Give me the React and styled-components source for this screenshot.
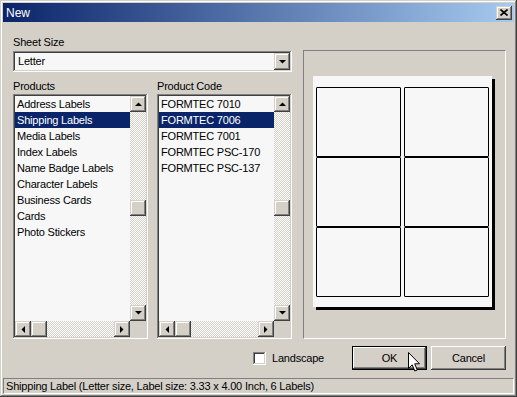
import React from 'react';
import styled, { createGlobalStyle, css } from 'styled-components';

const GlobalStyle = createGlobalStyle`
  html, body {
    margin: 0;
    padding: 0;
    background: #d4d0c8;
  }
  body {
    font-family: "Liberation Sans", Arial, sans-serif;
    font-size: 11px;
    letter-spacing: -0.2px;
    color: #000;
  }
`;

const raised = css`
  background: #d4d0c8;
  box-shadow: inset -1px -1px #404040, inset 1px 1px #d4d0c8,
    inset -2px -2px #808080, inset 2px 2px #fff;
`;

const sunken = css`
  box-shadow: inset -1px -1px #fff, inset 1px 1px #808080,
    inset -2px -2px #d4d0c8, inset 2px 2px #404040;
`;

const checker = css`
  background: repeating-conic-gradient(#d4d0c8 0 25%, #fff 0 50%) 0 0 / 2px 2px;
`;

const Window = styled.div`
  width: 517px;
  height: 397px;
  box-sizing: border-box;
  padding: 3px;
  background: #d4d0c8;
  box-shadow: inset -1px -1px #404040, inset 1px 1px #d4d0c8,
    inset -2px -2px #808080, inset 2px 2px #fff;
  display: flex;
  flex-direction: column;
`;

const TitleBar = styled.div`
  height: 19px;
  flex: none;
  display: flex;
  align-items: center;
  justify-content: space-between;
  padding-left: 3px;
  background: linear-gradient(to right, #0a246a, #a6caf0);
  color: #fff;
  font-size: 12px;
  letter-spacing: 0;
`;

const CloseBtn = styled.div`
  ${raised};
  width: 16px;
  height: 14px;
  margin-right: 2px;
  display: flex;
  align-items: center;
  justify-content: center;
`;

const Body = styled.div`
  flex: 1;
  display: flex;
  flex-direction: column;
  padding: 14px 8px 0 10px;
`;

const MainRow = styled.div`
  display: flex;
  gap: 11px;
`;

const LeftCol = styled.div`
  width: 279px;
  display: flex;
  flex-direction: column;
`;

const FieldLabel = styled.div`
  height: 13px;
  line-height: 13px;
  margin-bottom: ${(p) => p.$gap ?? 2}px;
  white-space: nowrap;
`;

const Combo = styled.div`
  ${sunken};
  height: 21px;
  box-sizing: border-box;
  padding: 2px;
  display: flex;
  background: #f7f7f7;
`;

const ComboText = styled.div`
  flex: 1;
  padding-left: 3px;
  line-height: 17px;
`;

const DropBtn = styled.div`
  ${raised};
  width: 16px;
  height: 17px;
  display: flex;
  align-items: center;
  justify-content: center;
`;

const ListsRow = styled.div`
  display: flex;
  gap: 9px;
  margin-top: 8px;
`;

const ListGroup = styled.div`
  width: 135px;
  display: flex;
  flex-direction: column;
`;

const ListBox = styled.div`
  ${sunken};
  height: 245px;
  box-sizing: border-box;
  padding: 2px;
  display: grid;
  grid-template-columns: 1fr 16px;
  grid-template-rows: 1fr 16px;
  background: #f7f7f7;
`;

const Items = styled.div`
  overflow: hidden;
  display: flex;
  flex-direction: column;
`;

const Item = styled.div`
  height: 16px;
  line-height: 16px;
  padding-left: 2px;
  white-space: nowrap;
  background: ${(p) => (p.$selected ? '#0a246a' : 'transparent')};
  color: ${(p) => (p.$selected ? '#fff' : '#000')};
`;

const VScroll = styled.div`
  ${checker};
  display: flex;
  flex-direction: column;
`;

const HScroll = styled.div`
  ${checker};
  display: flex;
`;

const Corner = styled.div`
  background: #d4d0c8;
`;

const ScrollBtn = styled.div`
  ${raised};
  width: 16px;
  height: 16px;
  flex: none;
  display: flex;
  align-items: center;
  justify-content: center;
  margin-top: ${(p) => (p.$end === 'v' ? 'auto' : '0')};
  margin-left: ${(p) => (p.$end === 'h' ? 'auto' : '0')};
`;

const Thumb = styled.div`
  ${raised};
  width: 16px;
  height: 16px;
  flex: none;
  margin-top: ${(p) => p.$top || 0}px;
`;

const Preview = styled.div`
  width: 203px;
  height: 289px;
  margin-top: 14px;
  box-sizing: border-box;
  border: 1px solid;
  border-color: #808080 #fff #fff #808080;
  padding: 25px 0 0 9px;
  display: flex;
  align-items: flex-start;
`;

const Paper = styled.div`
  width: 179px;
  height: 231px;
  box-sizing: border-box;
  padding: 11px 3px 0 3px;
  background: #f7f7f7;
  box-shadow: 3px 3px 0 #000;
  display: grid;
  grid-template-columns: 85px 85px;
  grid-auto-rows: 70px;
  column-gap: 3px;
`;

const Cell = styled.div`
  border: 1px solid #000;
  border-radius: 1px;
`;

const ButtonRow = styled.div`
  height: 24px;
  margin-top: 7px;
  display: flex;
  align-items: center;
  justify-content: flex-end;
  gap: 4px;
`;

const CheckLabel = styled.label`
  display: flex;
  align-items: center;
  gap: 6px;
  margin-right: 24px;
`;

const CheckBox = styled.span`
  ${sunken};
  width: 13px;
  height: 13px;
  background: #fff;
`;

const Button = styled.div`
  position: relative;
  width: 75px;
  height: 24px;
  box-sizing: border-box;
  display: flex;
  align-items: center;
  justify-content: center;
  ${raised};
  box-shadow: ${(p) =>
    p.$default
      ? 'inset 0 0 0 1px #000, inset -2px -2px #404040, inset 2px 2px #fff, inset -3px -3px #808080'
      : 'inset -1px -1px #404040, inset 1px 1px #fff, inset -2px -2px #808080'};
`;

const Cursor = styled.svg`
  position: absolute;
  left: 56px;
  top: 6px;
`;

const StatusBar = styled.div`
  height: 16px;
  margin-top: 8px;
  box-sizing: border-box;
  border: 1px solid;
  border-color: #808080 #fff #fff #808080;
  padding-left: 2px;
  line-height: 14px;
  white-space: nowrap;
  overflow: hidden;
`;

const Arrow = ({ dir }) => {
  const pts = {
    up: '0,4 7,4 3.5,0.5',
    down: '0,0 7,0 3.5,3.5',
    left: '4,0 4,7 0.5,3.5',
    right: '0,0 0,7 3.5,3.5',
  }[dir];
  const vertical = dir === 'up' || dir === 'down';
  return (
    <svg width={vertical ? 7 : 4} height={vertical ? 4 : 7}>
      <polygon points={pts} fill="#000" />
    </svg>
  );
};

const products = [
  'Address Labels',
  'Shipping Labels',
  'Media Labels',
  'Index Labels',
  'Name Badge Labels',
  'Character Labels',
  'Business Cards',
  'Cards',
  'Photo Stickers',
];

const codes = [
  'FORMTEC 7010',
  'FORMTEC 7006',
  'FORMTEC 7001',
  'FORMTEC PSC-170',
  'FORMTEC PSC-137',
];

function List({ items, selected }) {
  return (
    <ListBox>
      <Items>
        {items.map((it, i) => (
          <Item key={it} $selected={i === selected}>
            {it}
          </Item>
        ))}
      </Items>
      <VScroll>
        <ScrollBtn><Arrow dir="up" /></ScrollBtn>
        <Thumb $top={88} />
        <ScrollBtn $end="v"><Arrow dir="down" /></ScrollBtn>
      </VScroll>
      <HScroll>
        <ScrollBtn><Arrow dir="left" /></ScrollBtn>
        <Thumb />
        <ScrollBtn $end="h"><Arrow dir="right" /></ScrollBtn>
      </HScroll>
      <Corner />
    </ListBox>
  );
}

export default function App() {
  return (
    <>
      <GlobalStyle />
      <Window>
        <TitleBar>
          <span>New</span>
          <CloseBtn>
            <svg width="8" height="7">
              <path d="M0.5 0.5 L7.5 6.5 M7.5 0.5 L0.5 6.5" stroke="#000" strokeWidth="1.6" />
            </svg>
          </CloseBtn>
        </TitleBar>
        <Body>
          <MainRow>
            <LeftCol>
              <FieldLabel>Sheet Size</FieldLabel>
              <Combo>
                <ComboText>Letter</ComboText>
                <DropBtn><Arrow dir="down" /></DropBtn>
              </Combo>
              <ListsRow>
                <ListGroup>
                  <FieldLabel $gap={1}>Products</FieldLabel>
                  <List items={products} selected={1} />
                </ListGroup>
                <ListGroup>
                  <FieldLabel $gap={1}>Product Code</FieldLabel>
                  <List items={codes} selected={1} />
                </ListGroup>
              </ListsRow>
            </LeftCol>
            <Preview>
              <Paper>
                {Array.from({ length: 6 }).map((_, i) => (
                  <Cell key={i} />
                ))}
              </Paper>
            </Preview>
          </MainRow>
          <ButtonRow>
            <CheckLabel>
              <CheckBox />
              Landscape
            </CheckLabel>
            <Button $default>
              OK
              <Cursor width="13" height="21" viewBox="0 0 13 21">
                <path
                  d="M0.5 0.5 V16.5 L4.2 12.8 L6.8 19 L9.3 18 L6.7 11.8 H11.5 Z"
                  fill="#fff"
                  stroke="#000"
                  strokeWidth="1"
                />
              </Cursor>
            </Button>
            <Button>Cancel</Button>
          </ButtonRow>
        </Body>
        <StatusBar>
          Shipping Label (Letter size, Label size: 3.33 x 4.00 Inch, 6 Labels)
        </StatusBar>
      </Window>
    </>
  );
}
